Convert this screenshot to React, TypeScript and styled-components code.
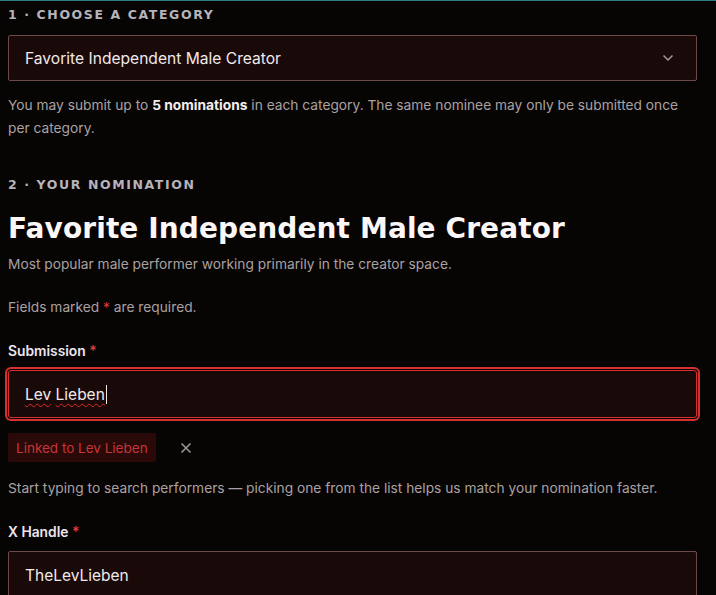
import React from "react";
import styled, { createGlobalStyle } from "styled-components";

const GlobalStyle = createGlobalStyle`
  html, body {
    margin: 0;
    padding: 0;
    background: #070404;
  }
  body {
    font-family: "Inter", "Liberation Sans", sans-serif;
    color: #a9a1a1;
    border-top: 1px solid #2f7f82;
  }
`;

const Page = styled.div`
  width: 689px;
  padding: 0 19px 0 8px;
  height: 594px;
  overflow: hidden;
`;

const StepLabel = styled.div<{ $top: number }>`
  font-family: "DejaVu Sans", sans-serif;
  font-weight: 700;
  font-size: 12.5px;
  letter-spacing: 1.6px;
  text-transform: uppercase;
  color: #b6b3bb;
  line-height: 16px;
  margin-top: ${({ $top }) => $top}px;
`;

const SelectBox = styled.div`
  margin-top: 12px;
  height: 44px;
  box-sizing: content-box;
  border: 1px solid #6d4a4a;
  border-radius: 2px;
  background: #190909;
  display: flex;
  align-items: center;
  justify-content: space-between;
  padding: 0 22px 0 16px;
  font-size: 15.6px;
  color: #f1e9e9;
`;

const HelpText = styled.p<{ $top: number }>`
  margin: ${({ $top }) => $top}px 0 0;
  font-size: 13.75px;
  line-height: 23px;
  color: #a9a1a1;

  strong {
    color: #f4eeee;
    font-weight: 700;
  }
`;

const Heading = styled.h1`
  margin: 18px 0 0;
  font-family: "DejaVu Sans", sans-serif;
  font-weight: 700;
  font-size: 28px;
  letter-spacing: 0.1px;
  line-height: 36px;
  color: #fbf7f7;
`;

const Req = styled.span`
  color: #e03a3a;
`;

const FieldLabel = styled.div<{ $top: number }>`
  margin-top: ${({ $top }) => $top}px;
  font-size: 13.8px;
  font-weight: 600;
  color: #ece6ee;
  line-height: 20px;
`;

const InputBox = styled.div<{ $focused?: boolean }>`
  margin-top: 9px;
  height: 46px;
  box-sizing: content-box;
  border: 1px solid ${({ $focused }) => ($focused ? "#d6302f" : "#6d4a4a")};
  background: #190909;
  display: flex;
  align-items: center;
  padding: 0 16px;
  font-size: 15.5px;
  color: #f1e9e9;
  box-shadow: ${({ $focused }) =>
    $focused ? "0 0 0 1px #0a0404, 0 0 0 3px #d6302f" : "none"};
  border-radius: ${({ $focused }) => ($focused ? "3px" : "2px")};
`;

const Misspelled = styled.span`
  text-decoration: underline wavy #e02828;
  text-decoration-thickness: 1px;
  text-underline-offset: 3px;
`;

const Caret = styled.span`
  display: inline-block;
  width: 1px;
  height: 19px;
  background: #f1e9e9;
  margin-left: 1px;
`;

const TagRow = styled.div`
  margin-top: 15px;
  display: flex;
  align-items: center;
  gap: 24px;
`;

const Tag = styled.span`
  background: #2a0909;
  color: #c93535;
  font-size: 13.5px;
  height: 29px;
  display: inline-flex;
  align-items: center;
  padding: 0 8px;
  border-radius: 2px;
`;

const ClearButton = styled.button`
  background: none;
  border: none;
  padding: 0;
  display: flex;
  color: #9b9595;
  cursor: pointer;
`;

const Chevron = () => (
  <svg width="12" height="8" viewBox="0 0 12 8" fill="none">
    <path d="M1.5 1.5 6 6l4.5-4.5" stroke="#a89a9a" strokeWidth="1.5" />
  </svg>
);

const XIcon = () => (
  <svg width="12" height="12" viewBox="0 0 12 12" fill="none">
    <path d="M1.5 1.5l9 9M10.5 1.5l-9 9" stroke="currentColor" strokeWidth="1.6" />
  </svg>
);

export default function App() {
  return (
    <Page>
      <GlobalStyle />
      <StepLabel $top={6}>1 · Choose a category</StepLabel>
      <SelectBox>
        <span>Favorite Independent Male Creator</span>
        <Chevron />
      </SelectBox>
      <HelpText $top={13}>
        You may submit up to <strong>5 nominations</strong> in each category.
        The same nominee may only be submitted once per category.
      </HelpText>

      <StepLabel $top={37}>2 · Your nomination</StepLabel>
      <Heading>Favorite Independent Male Creator</Heading>
      <HelpText $top={6}>
        Most popular male performer working primarily in the creator space.
      </HelpText>
      <HelpText $top={20}>
        Fields marked <Req>*</Req> are required.
      </HelpText>

      <FieldLabel $top={22}>
        Submission <Req>*</Req>
      </FieldLabel>
      <InputBox $focused>
        <Misspelled>Lev</Misspelled>&nbsp;<Misspelled>Lieben</Misspelled>
        <Caret />
      </InputBox>
      <TagRow>
        <Tag>Linked to Lev Lieben</Tag>
        <ClearButton aria-label="Clear">
          <XIcon />
        </ClearButton>
      </TagRow>
      <HelpText $top={15}>
        Start typing to search performers — picking one from the list helps us
        match your nomination faster.
      </HelpText>

      <FieldLabel $top={22}>
        X Handle <Req>*</Req>
      </FieldLabel>
      <InputBox>TheLevLieben</InputBox>
    </Page>
  );
}
